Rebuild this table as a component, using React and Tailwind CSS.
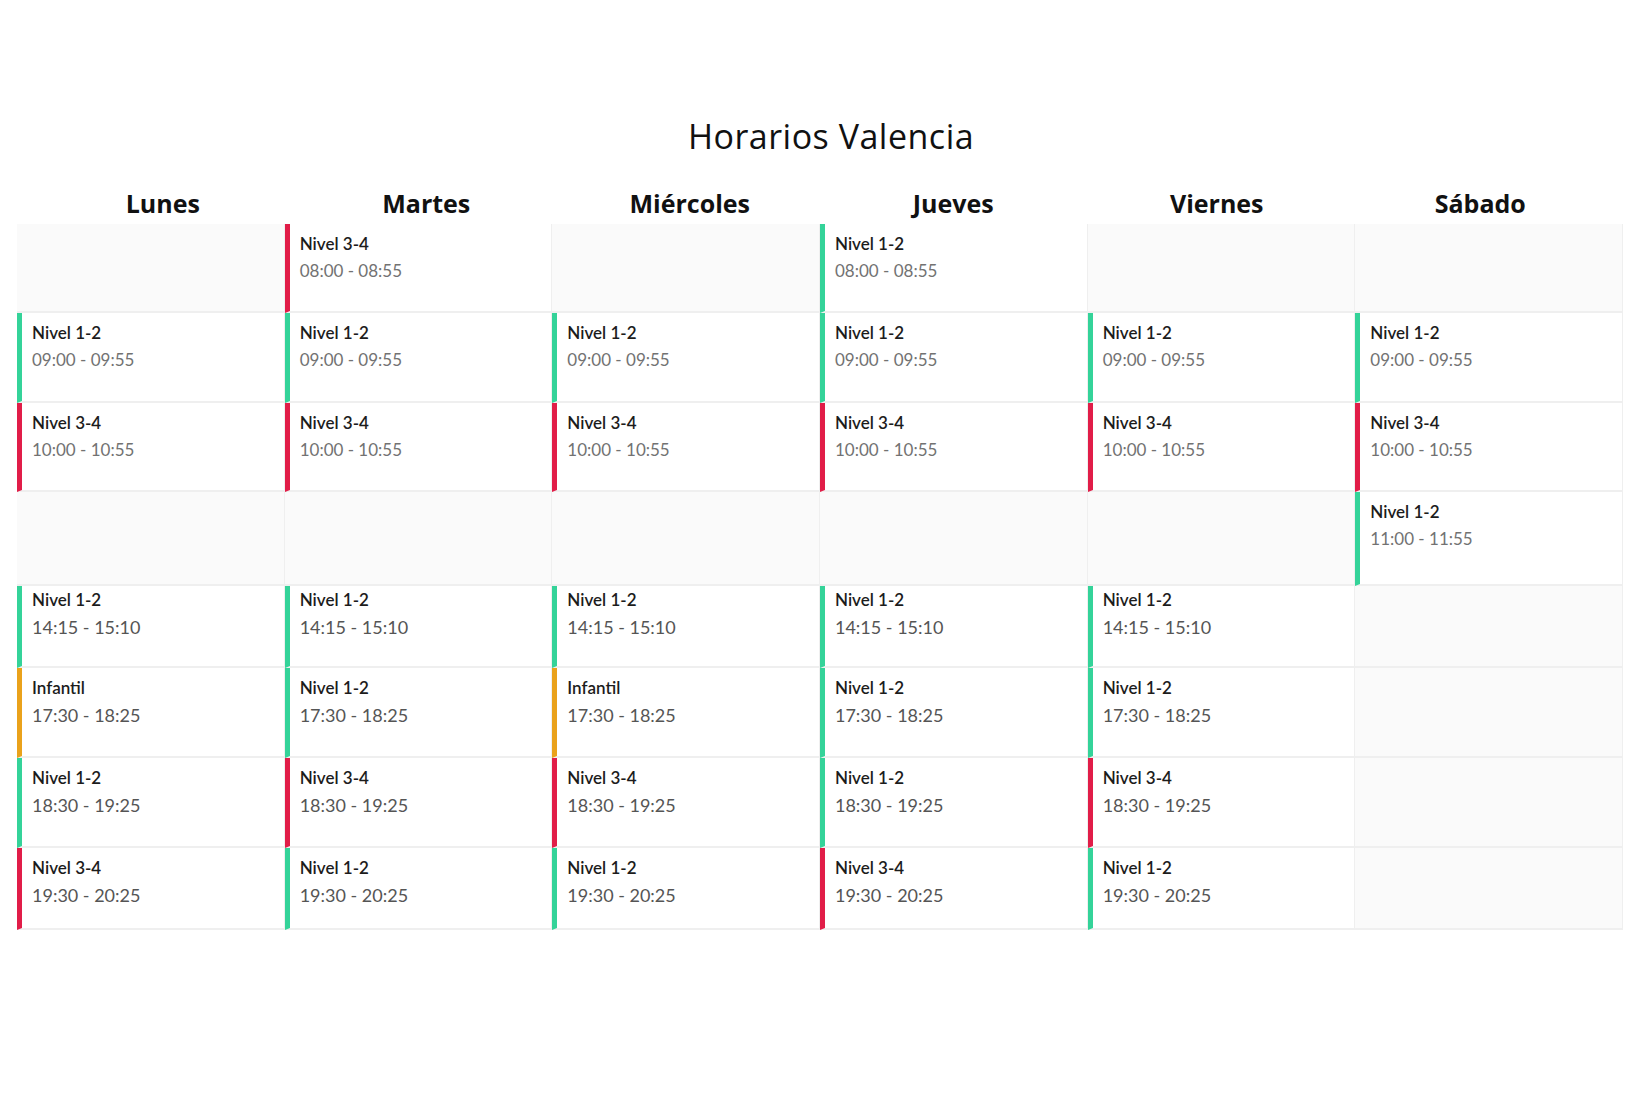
import React from 'react';

const N12 = 'Nivel 1-2';
const N34 = 'Nivel 3-4';
const INF = 'Infantil';

const barColor = {
  [N12]: 'border-l-[#34d399]',
  [N34]: 'border-l-[#e11d48]',
  [INF]: 'border-l-[#eaa21b]',
};

const days = [
  { name: 'Lunes', slots: [null, [N12, '09:00 - 09:55'], [N34, '10:00 - 10:55'], null, [N12, '14:15 - 15:10'], [INF, '17:30 - 18:25'], [N12, '18:30 - 19:25'], [N34, '19:30 - 20:25']] },
  { name: 'Martes', slots: [[N34, '08:00 - 08:55'], [N12, '09:00 - 09:55'], [N34, '10:00 - 10:55'], null, [N12, '14:15 - 15:10'], [N12, '17:30 - 18:25'], [N34, '18:30 - 19:25'], [N12, '19:30 - 20:25']] },
  { name: 'Miércoles', slots: [null, [N12, '09:00 - 09:55'], [N34, '10:00 - 10:55'], null, [N12, '14:15 - 15:10'], [INF, '17:30 - 18:25'], [N34, '18:30 - 19:25'], [N12, '19:30 - 20:25']] },
  { name: 'Jueves', slots: [[N12, '08:00 - 08:55'], [N12, '09:00 - 09:55'], [N34, '10:00 - 10:55'], null, [N12, '14:15 - 15:10'], [N12, '17:30 - 18:25'], [N12, '18:30 - 19:25'], [N34, '19:30 - 20:25']] },
  { name: 'Viernes', slots: [null, [N12, '09:00 - 09:55'], [N34, '10:00 - 10:55'], null, [N12, '14:15 - 15:10'], [N12, '17:30 - 18:25'], [N34, '18:30 - 19:25'], [N12, '19:30 - 20:25']] },
  { name: 'Sábado', slots: [null, [N12, '09:00 - 09:55'], [N34, '10:00 - 10:55'], [N12, '11:00 - 11:55'], null, null, null, null] },
];

// row heights follow the reference (the morning rows are a bit taller)
const rows = [
  { h: 'h-[89px]', pt: 'pt-[8px]' },
  { h: 'h-[90px]', pt: 'pt-[8px]' },
  { h: 'h-[89px]', pt: 'pt-[8px]' },
  { h: 'h-[94px]', pt: 'pt-[8px]' },
  { h: 'h-[82px]', pt: 'pt-[2px]' },
  { h: 'h-[90px]', pt: 'pt-[8px]' },
  { h: 'h-[90px]', pt: 'pt-[8px]' },
  { h: 'h-[82px]', pt: 'pt-[8px]' },
];

const Cell = ({ slot, row, late }) => {
  if (!slot) return <div className={`${row.h} bg-[#fafafa] border-b-2 border-r border-[#efefef]`}></div>;
  const [level, time] = slot;
  return (
    <div className={`${row.h} ${row.pt} bg-white border-b-2 border-r border-[#efefef] border-l-[5px] ${barColor[level]} pl-[10px]`}>
      <p className="text-[17px] leading-[24px] font-semibold text-[#1c1c1c]">{level}</p>
      <p className={`${late ? 'text-[18px] text-[#555]' : 'text-[17px] text-[#727272]'} leading-[26px] mt-[2px]`}>{time}</p>
    </div>
  );
};

const App = () => {
  return (
    <div className="min-h-[1107px] bg-white px-[17px] pt-[114px]" style={{ fontFamily: 'Lato, "Open Sans", sans-serif' }}>
      <h1 className="text-center text-[34px] leading-[44px] text-[#111] font-normal tracking-[0.5px] pl-[22px]" style={{ fontFamily: '"Open Sans", Lato, sans-serif' }}>Horarios Valencia</h1>
      <div className="grid grid-cols-6 mt-[28px] pl-[14px] pr-[11px]">
        {days.map((d) => (
          <div key={d.name} className="text-center text-[25px] leading-[34px] font-bold text-[#111] mb-[4px]" style={{ fontFamily: '"Open Sans", Lato, sans-serif' }}>{d.name}</div>
        ))}
      </div>
      <div className="grid grid-cols-6">
        {rows.map((row, r) =>
          days.map((d) => <Cell key={`${d.name}-${r}`} slot={d.slots[r]} row={row} late={r >= 4} />)
        )}
      </div>
    </div>
  );
};

export default App;
